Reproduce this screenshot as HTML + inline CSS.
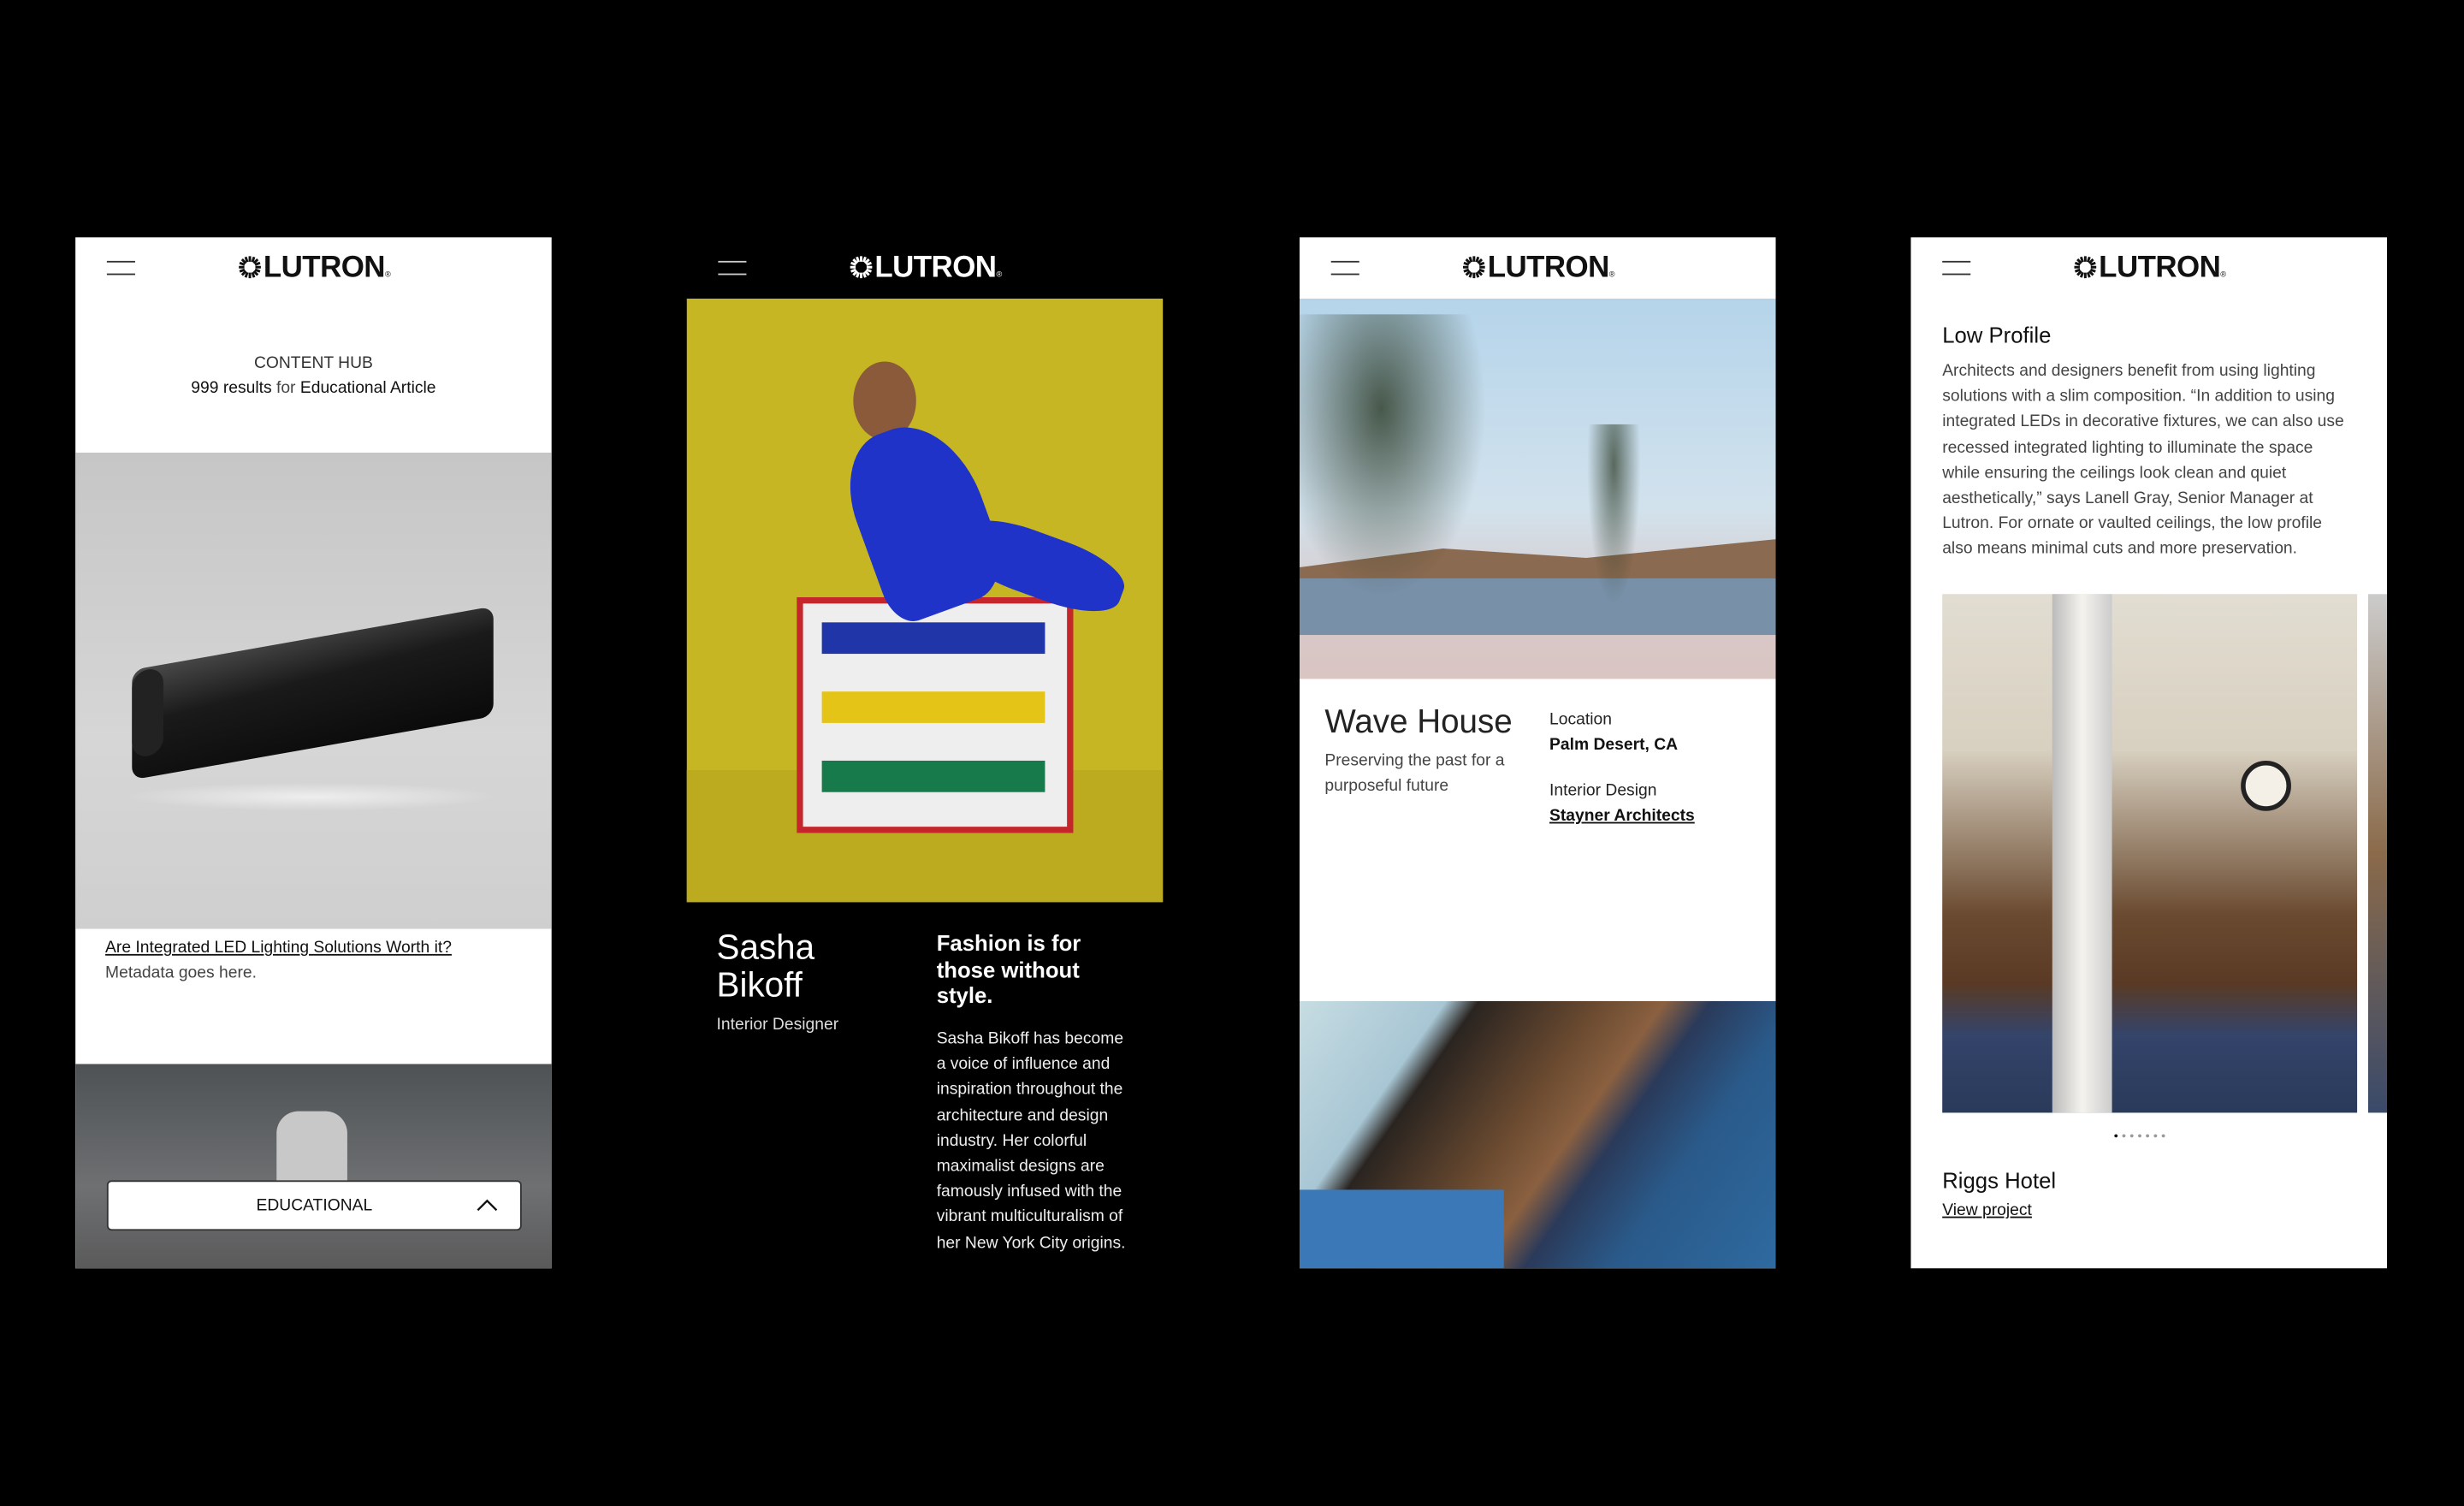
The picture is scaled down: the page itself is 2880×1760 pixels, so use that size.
<!DOCTYPE html>
<html><head><meta charset="utf-8"><style>
html,body{margin:0;padding:0;background:#000;width:2880px;height:1760px;overflow:hidden}
#s{position:absolute;left:0;top:0;width:1568px;height:958px;transform:scale(1.83673);transform-origin:0 0;font-family:"Liberation Sans",Arial,sans-serif}
.a{position:absolute}
.ph{position:absolute;top:151px;width:303px;height:656px;overflow:hidden}
.ham{position:absolute;left:20px;top:15px;width:18px;height:7px;border-top:1px solid #333;border-bottom:1px solid #333}
.logo{position:absolute;left:0;width:303px;top:9px;text-align:center;font-weight:bold;font-size:19px;letter-spacing:-0.3px;line-height:22px}
.logo svg{vertical-align:-2px;margin-right:1px}
.t{position:absolute;font-size:10.5px;line-height:16.2px}
</style></head><body><div id="s">
<svg width="0" height="0" style="position:absolute"><defs><g id="sun"><g stroke-width="1.6" stroke-linecap="butt">
<line x1="8" y1="1" x2="8" y2="4.5"/><line x1="8" y1="11.5" x2="8" y2="15"/><line x1="1" y1="8" x2="4.5" y2="8"/><line x1="11.5" y1="8" x2="15" y2="8"/>
<line x1="3" y1="3" x2="5.5" y2="5.5"/><line x1="10.5" y1="10.5" x2="13" y2="13"/><line x1="13" y1="3" x2="10.5" y2="5.5"/><line x1="3" y1="13" x2="5.5" y2="10.5"/>
<line x1="5.3" y1="1.5" x2="6.4" y2="4.7"/><line x1="10.7" y1="1.5" x2="9.6" y2="4.7"/><line x1="5.3" y1="14.5" x2="6.4" y2="11.3"/><line x1="10.7" y1="14.5" x2="9.6" y2="11.3"/>
<line x1="1.5" y1="5.3" x2="4.7" y2="6.4"/><line x1="1.5" y1="10.7" x2="4.7" y2="9.6"/><line x1="14.5" y1="5.3" x2="11.3" y2="6.4"/><line x1="14.5" y1="10.7" x2="11.3" y2="9.6"/>
</g></g></defs></svg>

<!-- Phone 1 -->
<div class="ph" style="left:48px;background:#fff">
 <div class="ham"></div>
 <div class="logo" style="color:#111"><svg width="16" height="16" viewBox="0 0 16 16" stroke="#111"><use href="#sun"/></svg>LUTRON<span style="font-size:5px;font-weight:normal">®</span></div>
 <div class="t" style="left:0;width:303px;top:72px;text-align:center;color:#333">CONTENT HUB</div>
 <div class="t" style="left:0;width:303px;top:88px;text-align:center;color:#111">999 results <span style="color:#444">for</span> Educational Article</div>
 <div class="a" style="left:0;top:137px;width:303px;height:303px;background:linear-gradient(#c6c6c6,#d6d6d6 60%,#cfcfcf)">
  <div class="a" style="left:30px;top:210px;width:240px;height:18px;background:radial-gradient(ellipse,#eee,transparent 70%)"></div>
  <div class="a" style="left:36px;top:118px;width:230px;height:70px;background:linear-gradient(175deg,#4a4a4a,#1a1a1a 40%,#0a0a0a);border-radius:8px;transform:skewY(-10deg)"></div>
  <div class="a" style="left:36px;top:138px;width:20px;height:55px;background:#222;border-radius:10px;transform:skewY(-10deg)"></div>
 </div>
 <div class="t" style="left:19px;top:444px;color:#111;text-decoration:underline">Are Integrated LED Lighting Solutions Worth it?</div>
 <div class="t" style="left:19px;top:460px;color:#444">Metadata goes here.</div>
 <div class="a" style="left:0;top:526px;width:303px;height:130px;background:linear-gradient(#4e5254,#6e7072 60%,#5a5a5a)">
  <div class="a" style="left:128px;top:30px;width:45px;height:60px;background:#c8c8c8;border-radius:14px 14px 0 0"></div>
  <div class="a" style="left:20px;top:74px;width:262px;height:30px;background:#fff;border:1px solid #333;border-radius:3px;font-size:10.5px;line-height:30px;text-align:center;color:#111">EDUCATIONAL<svg style="position:absolute;right:14px;top:10px" width="14" height="9" viewBox="0 0 14 9"><path d="M1 8 L7 2 L13 8" fill="none" stroke="#111" stroke-width="1.3"/></svg></div>
 </div>
</div>

<!-- Phone 2 -->
<div class="ph" style="left:437px;background:#000">
 <div class="ham" style="border-color:#ccc"></div>
 <div class="logo" style="color:#fff"><svg width="16" height="16" viewBox="0 0 16 16" stroke="#fff"><use href="#sun"/></svg>LUTRON<span style="font-size:5px;font-weight:normal">®</span></div>
 <div class="a" style="left:0;top:39px;width:304px;height:384px;background:#c7b624">
  <div class="a" style="left:0;top:300px;width:304px;height:84px;background:#bcab1f"></div>
  <div class="a" style="left:70px;top:190px;width:168px;height:142px;background:#eee;border:4px solid #c4262b"></div>
  <div class="a" style="left:86px;top:206px;width:142px;height:20px;background:#1f35a8"></div>
  <div class="a" style="left:86px;top:250px;width:142px;height:20px;background:#e4c417"></div>
  <div class="a" style="left:86px;top:294px;width:142px;height:20px;background:#167a4a"></div>
  <div class="a" style="left:106px;top:40px;width:40px;height:50px;background:#8a5a3a;border-radius:50%"></div>
  <div class="a" style="left:110px;top:80px;width:80px;height:120px;background:#1f33c8;border-radius:40% 50% 30% 20%;transform:rotate(-20deg)"></div>
  <div class="a" style="left:170px;top:150px;width:110px;height:40px;background:#1f33c8;border-radius:40%;transform:rotate(20deg)"></div>
 </div>
 <div class="a" style="left:19px;top:440px;color:#fff;font-size:22px;line-height:24px">Sasha<br>Bikoff</div>
 <div class="t" style="left:19px;top:493px;color:#ddd">Interior Designer</div>
 <div class="a" style="left:159px;top:441px;color:#fff;font-size:14px;line-height:16.5px;font-weight:bold">Fashion is for<br>those without<br>style.</div>
 <div class="t" style="left:159px;top:502px;color:#eee;width:124px">Sasha Bikoff has become a voice of influence and inspiration throughout the architecture and design industry. Her colorful maximalist designs are famously infused with the vibrant multiculturalism of her New York City origins.</div>
</div>

<!-- Phone 3 -->
<div class="ph" style="left:827px;background:#fff">
 <div class="ham"></div>
 <div class="logo" style="color:#111"><svg width="16" height="16" viewBox="0 0 16 16" stroke="#111"><use href="#sun"/></svg>LUTRON<span style="font-size:5px;font-weight:normal">®</span></div>
 <div class="a" style="left:0;top:39px;width:304px;height:242px;background:linear-gradient(#b5d4ea,#d2e2ed 55%,#d8c8c8 82%,#d9c6c3)">
  <div class="a" style="left:0;top:150px;width:304px;height:30px;background:#8a6a50;clip-path:polygon(0 70%,30% 30%,60% 50%,100% 10%,100% 100%,0 100%)"></div>
  <div class="a" style="left:0;top:178px;width:304px;height:36px;background:#7890a8"></div>
  <div class="a" style="left:0;top:10px;width:130px;height:200px;background:radial-gradient(ellipse at 40% 30%,rgba(40,55,35,.8),transparent 60%)"></div>
  <div class="a" style="left:180px;top:80px;width:40px;height:130px;background:radial-gradient(ellipse at 50% 20%,rgba(40,55,35,.7),transparent 60%)"></div>
 </div>
 <div class="a" style="left:16px;top:297px;font-size:21px;color:#222">Wave House</div>
 <div class="t" style="left:16px;top:325px;color:#444;width:130px">Preserving the past for a purposeful future</div>
 <div class="t" style="left:159px;top:299px;color:#222">Location</div>
 <div class="t" style="left:159px;top:315px;color:#111;font-weight:bold">Palm Desert, CA</div>
 <div class="t" style="left:159px;top:344px;color:#222">Interior Design</div>
 <div class="t" style="left:159px;top:360px;color:#111;font-weight:bold;text-decoration:underline">Stayner Architects</div>
 <div class="a" style="left:0;top:486px;width:304px;height:170px;background:linear-gradient(125deg,#c6dce2 0%,#a8c6d4 22%,#2a2420 27%,#6a4a30 45%,#8a6040 55%,#2a3a5a 62%,#2a5a8a 75%,#2e6aa0)">
  <div class="a" style="left:0;top:120px;width:130px;height:50px;background:#3b78b8"></div>
 </div>
</div>

<!-- Phone 4 -->
<div class="ph" style="left:1216px;background:#fff">
 <div class="ham"></div>
 <div class="logo" style="color:#111"><svg width="16" height="16" viewBox="0 0 16 16" stroke="#111"><use href="#sun"/></svg>LUTRON<span style="font-size:5px;font-weight:normal">®</span></div>
 <div class="a" style="left:20px;top:54px;font-size:14px;color:#111">Low Profile</div>
 <div class="t" style="left:20px;top:77px;width:262px;color:#444;font-size:10.5px">Architects and designers benefit from using lighting solutions with a slim composition. “In addition to using integrated LEDs in decorative fixtures, we can also use recessed integrated lighting to illuminate the space while ensuring the ceilings look clean and quiet aesthetically,” says Lanell Gray, Senior Manager at Lutron. For ornate or vaulted ceilings, the low profile also means minimal cuts and more preservation.</div>
 <div class="a" style="left:20px;top:227px;width:264px;height:330px;background:linear-gradient(#e2ddd2,#d8d0c0 30%,#6a4a30 62%,#5a3a24 75%,#34446a 85%,#2a3a5a)">
  <div class="a" style="left:70px;top:0;width:38px;height:330px;background:linear-gradient(90deg,#bbb,#f5f3ee,#ccc)"></div>
  <div class="a" style="left:190px;top:106px;width:26px;height:26px;border-radius:50%;background:#f4f0e8;border:3px solid #222"></div>
 </div>
 <div class="a" style="left:291px;top:227px;width:12px;height:330px;background:linear-gradient(#ccc,#8a6a4a,#3a4a6a)"></div>
 <div class="a" style="left:129px;top:569px;font-size:5px;color:#999;letter-spacing:2px"><span style="color:#111">●</span>●●●●●●</div>
 <div class="a" style="left:20px;top:592px;font-size:14px;color:#111">Riggs Hotel</div>
 <div class="t" style="left:20px;top:611px;color:#111;text-decoration:underline">View project</div>
</div>

</div></body></html>
